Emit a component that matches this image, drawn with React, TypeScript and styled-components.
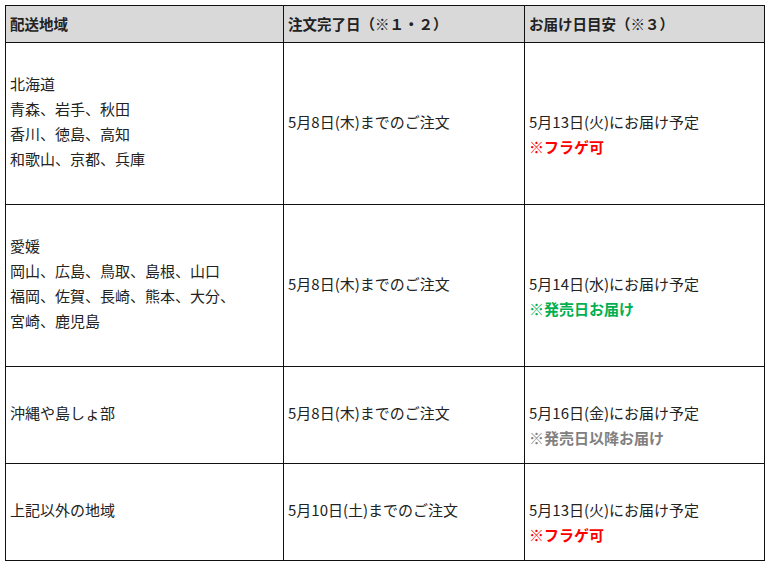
import { FC } from 'react'
import styled, { createGlobalStyle } from 'styled-components'

const GlobalStyle = createGlobalStyle`
  html, body {
    margin: 0;
    padding: 0;
    background: #ffffff;
  }
  body {
    font-family: "Noto Sans CJK JP", "Noto Sans", sans-serif;
    color: #222222;
  }
`

type NoteTone = 'red' | 'green' | 'gray'

const TONES: Record<NoteTone, string> = {
  red: '#ff0000',
  green: '#00b050',
  gray: '#808080',
}

const LINE = 25

const Page = styled.div`
  padding: 5px;
`

const Table = styled.table`
  width: 760px;
  border-collapse: collapse;
  table-layout: fixed;
  font-size: 15px;
  line-height: ${LINE}px;
`

const HeadRow = styled.tr`
  height: 37px;
  background: #d9d9d9;
`

const HeadCell = styled.th<{ $width?: number }>`
  width: ${({ $width }) => ($width ? `${$width}px` : 'auto')};
  border: 1px solid #111111;
  padding: 0 4px 2px;
  text-align: left;
  font-weight: 700;
  font-size: 14.5px;
  vertical-align: middle;
`

const BodyRow = styled.tr<{ $height: number }>`
  height: ${({ $height }) => $height}px;
`

const Cell = styled.td`
  border: 1px solid #111111;
  padding: 0 4px 5px;
  vertical-align: middle;
  white-space: nowrap;
`

/* the date line sits on the row's middle, the note hangs below it */
const DeliveryCell = styled(Cell)`
  padding-top: ${LINE}px;
`

const Line = styled.div``

const Note = styled.div<{ $tone: NoteTone }>`
  color: ${({ $tone }) => TONES[$tone]};
  font-weight: 700;
`

interface Row {
  readonly areas: string[]
  readonly deadline: string
  readonly delivery: string
  readonly note: string
  readonly tone: NoteTone
  readonly height: number
}

const ROWS: Row[] = [
  {
    areas: ['北海道', '青森、岩手、秋田', '香川、徳島、高知', '和歌山、京都、兵庫'],
    deadline: '5月8日(木)までのご注文',
    delivery: '5月13日(火)にお届け予定',
    note: '※フラゲ可',
    tone: 'red',
    height: 162,
  },
  {
    areas: [
      '愛媛',
      '岡山、広島、鳥取、島根、山口',
      '福岡、佐賀、長崎、熊本、大分、',
      '宮崎、鹿児島',
    ],
    deadline: '5月8日(木)までのご注文',
    delivery: '5月14日(水)にお届け予定',
    note: '※発売日お届け',
    tone: 'green',
    height: 162,
  },
  {
    areas: ['沖縄や島しょ部'],
    deadline: '5月8日(木)までのご注文',
    delivery: '5月16日(金)にお届け予定',
    note: '※発売日以降お届け',
    tone: 'gray',
    height: 97,
  },
  {
    areas: ['上記以外の地域'],
    deadline: '5月10日(土)までのご注文',
    delivery: '5月13日(火)にお届け予定',
    note: '※フラゲ可',
    tone: 'red',
    height: 97,
  },
]

const App: FC = () => (
  <Page>
    <GlobalStyle />
    <Table>
      <thead>
        <HeadRow>
          <HeadCell $width={269}>配送地域</HeadCell>
          <HeadCell $width={232}>注文完了日（※１・２）</HeadCell>
          <HeadCell>お届け日目安（※３）</HeadCell>
        </HeadRow>
      </thead>
      <tbody>
        {ROWS.map((row, i) => (
          <BodyRow key={i} $height={row.height}>
            <Cell>
              {row.areas.map((area) => (
                <Line key={area}>{area}</Line>
              ))}
            </Cell>
            <Cell>{row.deadline}</Cell>
            <DeliveryCell>
              <Line>{row.delivery}</Line>
              <Note $tone={row.tone}>{row.note}</Note>
            </DeliveryCell>
          </BodyRow>
        ))}
      </tbody>
    </Table>
  </Page>
)

export default App
